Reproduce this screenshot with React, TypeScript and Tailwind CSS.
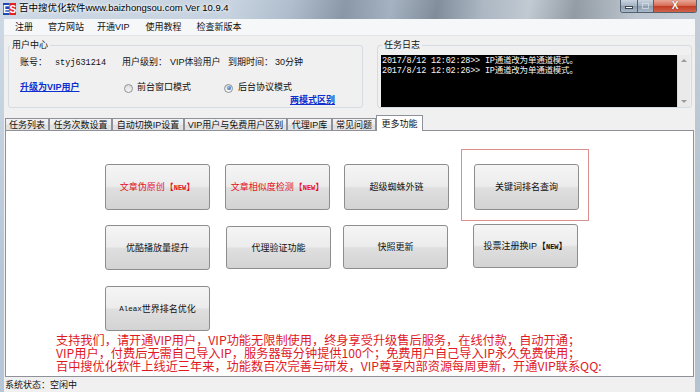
import React from 'react';

const TABS = [
  { label: '任务列表', w: 'w-[44px]' },
  { label: '任务次数设置', w: 'w-[63px]' },
  { label: '自动切换IP设置', w: 'w-[72px]' },
  { label: 'VIP用户与免费用户区别', w: 'w-[103px]' },
  { label: '代理IP库', w: 'w-[45px]' },
  { label: '常见问题', w: 'w-[44px]' },
];

const New = () => (
  <span>
    【<span className="font-['Liberation_Mono',monospace] font-bold text-[7px]">NEW</span>】
  </span>
);

const Btn = ({
  children,
  red = false,
  className = '',
}: {
  children: React.ReactNode;
  red?: boolean;
  className?: string;
}) => (
  <div
    className={`w-[105px] flex items-center justify-center rounded-[3px] border border-[#8c8d8d] bg-[linear-gradient(#f5f5f5,#ececec_48%,#dfdfdf_52%,#d3d3d3)] text-[9px] leading-[10px] ${
      red ? 'text-[#e3121b]' : 'text-[#111]'
    } ${className}`}
  >
    {children}
  </div>
);

const Radio = ({ checked = false }: { checked?: boolean }) => (
  <span className="w-[9px] h-[9px] rounded-full border border-[#8e9296] bg-[linear-gradient(#dcdcdc,#f6f6f6)] flex items-center justify-center">
    {checked && <span className="w-[4px] h-[4px] rounded-full bg-[radial-gradient(circle_at_35%_35%,#8fc0f0,#1f4f93)]" />}
  </span>
);

const TitleBar = () => (
  <div className="h-[19px] flex items-start shrink-0">
    <svg width="13" height="12" viewBox="0 0 13 12" className="ml-[3px] mt-[3px]">
      <rect x="0" y="0" width="6.5" height="12" fill="#1d47b5" />
      <rect x="6.5" y="0" width="6.5" height="12" fill="#e0231f" />
      <text x="3.2" y="10" fontSize="10" fontWeight="bold" fill="#fff" textAnchor="middle" fontFamily="Liberation Sans">E</text>
      <text x="9.8" y="10" fontSize="10" fontWeight="bold" fill="#fff" textAnchor="middle" fontFamily="Liberation Sans">S</text>
    </svg>
    <span className="ml-[3px] mt-[2px] text-[9.5px] leading-[12px] text-black [text-shadow:0_0_5px_#fff,0_0_3px_#fff]">
      百中搜优化软件www.baizhongsou.com Ver 10.9.4
    </span>
    <div className="ml-auto mr-[3px] flex h-[13px] rounded-b-[3px] border border-t-0 border-[#53606e] overflow-hidden">
      <div className="w-[17px] flex items-end justify-center pb-[3px] bg-[linear-gradient(#c9d4df,#a3b1c0_50%,#8d9cad_51%,#a9b8c8)] border-r border-[#53606e]">
        <span className="w-[8px] h-[3px] bg-white border border-[#3c4652]" />
      </div>
      <div className="w-[16px] flex items-center justify-center bg-[linear-gradient(#c9d4df,#a3b1c0_50%,#8d9cad_51%,#a9b8c8)] border-r border-[#53606e]">
        <span className="w-[7px] h-[6px] border border-[#dde4ea] opacity-70" />
      </div>
      <div className="w-[42px] flex items-center justify-center bg-[linear-gradient(#e9a796,#d46a53_50%,#c23a22_51%,#d0634b)]">
        <span className="text-white font-bold text-[10px] leading-[10px] font-['Liberation_Sans',sans-serif] [text-shadow:0_0_1px_#5a1a10]">X</span>
      </div>
    </div>
  </div>
);

export default function App() {
  return (
    <div className="w-[700px] h-[392px] overflow-hidden flex flex-col font-['Liberation_Sans','Noto_Sans_CJK_SC',sans-serif] bg-[linear-gradient(180deg,rgba(255,255,255,0.3),rgba(255,255,255,0)_70%),linear-gradient(100deg,#b9c9da_0%,#b0c1d3_30%,#8ea2b8_38%,#5a6d82_45%,#7f92a7_51%,#4e5f72_57%,#8a9aab_63%,#a8b3bf_69%,#66737f_75%,#a3b0bd_83%,#b6c4d2_100%)]">
      <TitleBar />

      <div className="flex-1 min-h-0 flex flex-col ml-[4px] mr-[5px] bg-[#f0f0f0] rounded-t-[2px]">
        {/* menu */}
        <div className="h-[17px] shrink-0 flex items-center bg-[#f6f7f9] border-b border-[#e2e4e7] text-[9px] leading-[10px] text-[#111]">
          <span className="ml-[11px]">注册</span>
          <span className="ml-[15px]">官方网站</span>
          <span className="ml-[13px]">开通VIP</span>
          <span className="ml-[16px]">使用教程</span>
          <span className="ml-[15px]">检查新版本</span>
        </div>

        {/* user center + log */}
        <div className="h-[78px] shrink-0 flex items-start">
          <fieldset className="ml-[4px] mt-[4px] w-[355px] h-[68px] border border-[#d5dbe0] rounded-[3px] text-[9px] text-[#111]">
            <legend className="ml-[1px] px-[2px] leading-[10px]">用户中心</legend>
            <div className="flex items-center h-[12px] mt-[7px] pl-[11px]">
              <span className="w-[35px]">账号：</span>
              <span className="w-[67px] font-['Liberation_Mono',monospace] text-[8.5px]">styj631214</span>
              <span className="w-[48px]">用户级别：</span>
              <span className="w-[58px]">VIP体验用户</span>
              <span className="w-[47px]">到期时间：</span>
              <span>30分钟</span>
            </div>
            <div className="flex items-center h-[12px] mt-[13px] pl-[11px]">
              <span className="w-[104px] text-[#0f2fd0] font-bold underline">升级为VIP用户</span>
              <span className="w-[100px] flex items-center gap-[4px]">
                <Radio />
                前台窗口模式
              </span>
              <span className="flex items-center gap-[5px]">
                <Radio checked />
                后台协议模式
              </span>
            </div>
            <div className="h-[11px] leading-[11px] mt-[1px] pl-[281px]">
              <span className="text-[#0f2fd0] font-semibold underline">两模式区别</span>
            </div>
          </fieldset>

          <fieldset className="ml-[14px] mt-[4px] w-[315px] h-[68px] border border-[#d5dbe0] rounded-[3px] text-[9px] text-[#111]">
            <legend className="ml-[4px] px-[2px] leading-[10px]">任务日志</legend>
            <div className="flex ml-[3px] mt-[5px] h-[52px]">
              <div className="w-[296px] bg-black text-[#f2f2f2] text-[8.5px] leading-[10px] pt-[1px] pl-[1px] tracking-[-0.2px] font-['Liberation_Mono','Noto_Sans_CJK_SC',monospace]">
                <div>2017/8/12 12:02:28&gt;&gt; IP通道改为单通道模式。</div>
                <div>2017/8/12 12:02:26&gt;&gt; IP通道改为单通道模式。</div>
              </div>
              <div className="w-[13px] bg-[#eaeaea] border-l border-[#dcdcdc] flex flex-col items-center justify-between py-[4px]">
                <span className="w-0 h-0 border-x-[3px] border-x-transparent border-b-[3px] border-b-[#9a9a9a]" />
                <span className="w-0 h-0 border-x-[3px] border-x-transparent border-t-[3px] border-t-[#9a9a9a]" />
              </div>
            </div>
          </fieldset>
        </div>

        {/* tabs */}
        <div className="h-[16px] shrink-0 flex items-end ml-[1px] text-[9px] leading-[10px] text-[#111]">
          {TABS.map((t) => (
            <div
              key={t.label}
              className={`${t.w} h-[12px] flex items-center justify-center border border-b-0 border-[#8e919a] bg-[linear-gradient(#f3f3f3,#ebebeb_50%,#dedede_51%,#e4e4e4)]`}
            >
              {t.label}
            </div>
          ))}
          <div className="relative z-10 w-[47px] h-[16px] -mb-px flex items-center justify-center border border-b-0 border-[#8e919a] bg-white">
            更多功能
          </div>
        </div>

        {/* panel */}
        <div className="flex-1 min-h-0 mx-[1px] bg-white border border-[#8e919a] flex flex-col">
          <div className="flex items-start mt-[18px] ml-[99px]">
            <Btn red className="h-[46px] mt-[15px]">
              文章伪原创<New />
            </Btn>
            <Btn red className="h-[46px] mt-[15px] ml-[15px]">
              文章相似度检测<New />
            </Btn>
            <Btn className="h-[46px] mt-[15px] ml-[14px]">超级蜘蛛外链</Btn>
            <div className="ml-[12px] border border-[#dc8f8f] pt-[14px] pl-[12px] pr-[9px] pb-[10px]">
              <Btn className="h-[46px]">关键词排名查询</Btn>
            </div>
          </div>

          <div className="flex items-start mt-[3px] ml-[99px]">
            <Btn className="h-[45px] mt-[1px]">优酷播放量提升</Btn>
            <Btn className="h-[43px] mt-[2px] ml-[16px]">代理验证功能</Btn>
            <Btn className="h-[44px] mt-[1px] ml-[12px]">快照更新</Btn>
            <Btn className="h-[44px] ml-[25px]">
              投票注册换IP<New />
            </Btn>
          </div>

          <div className="flex mt-[16px] ml-[99px]">
            <Btn className="h-[45px]">
              <span className="font-['Liberation_Mono',monospace] text-[7.5px]">Aleax</span>世界排名优化
            </Btn>
          </div>

          <div className="mt-[3px] ml-[50px] text-[12.2px] leading-[13px] text-[#e0191f] font-['Noto_Sans_CJK_SC',sans-serif]">
            <div>支持我们，请开通VIP用户，VIP功能无限制使用，终身享受升级售后服务，在线付款，自动开通；</div>
            <div>VIP用户，付费后无需自己导入IP，服务器每分钟提供100个；免费用户自己导入IP永久免费使用；</div>
            <div>百中搜优化软件上线近三年来，功能数百次完善与研发，VIP尊享内部资源每周更新，开通VIP联系QQ:</div>
          </div>
        </div>

        {/* status */}
        <div className="h-[15px] shrink-0 flex items-center pl-[1px] text-[9px] leading-[10px] text-[#111] bg-[#f0f0f0]">
          系统状态：空闲中
        </div>
      </div>
    </div>
  );
}
